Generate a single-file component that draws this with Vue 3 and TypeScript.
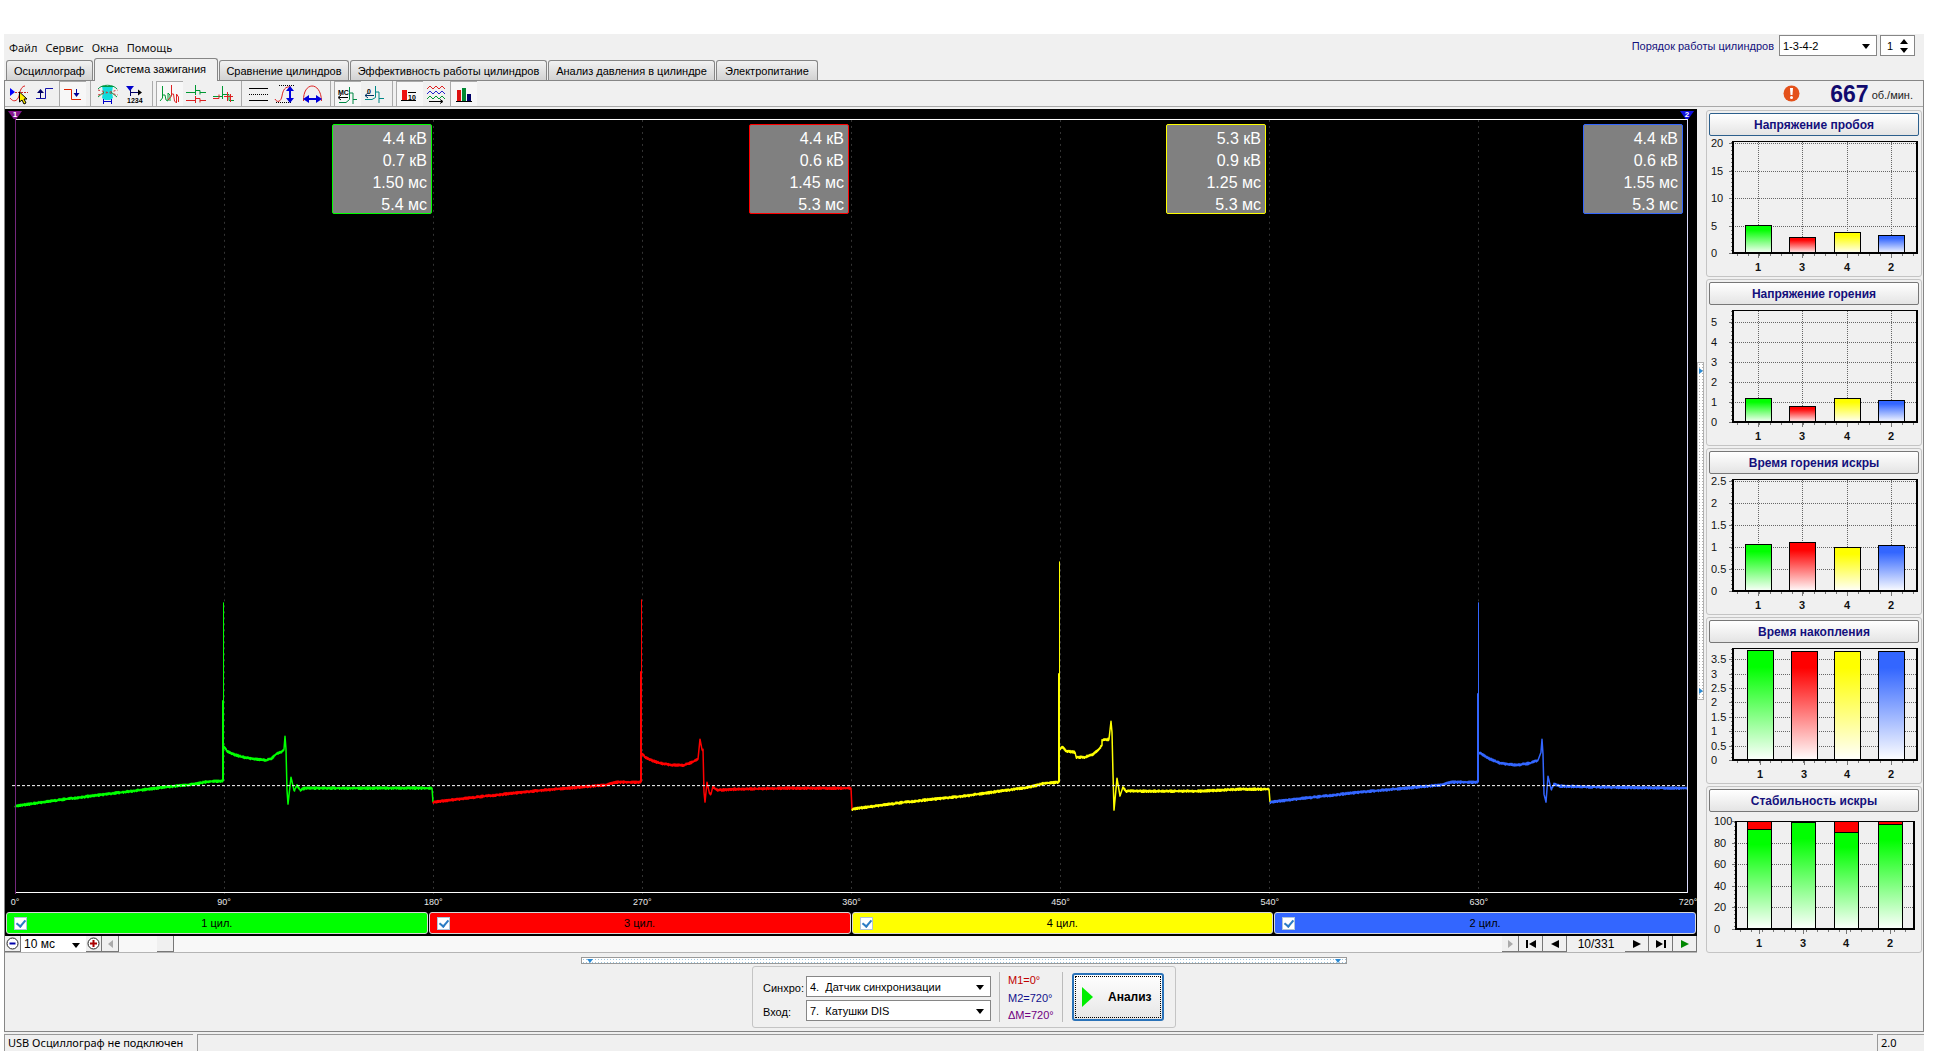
<script setup lang="ts">
import { ref } from 'vue'

type Point = [number, number]

interface Cylinder {
  id: number
  color: string
  values: string[]
  spike: { x: number; top: number; stub: number; base: number }
  before: Point[]
  after: Point[]
}

interface Bar {
  x: number
  top: number
  color: string
  label: string
  bad?: number
}

interface Chart {
  title: string
  left: number
  right: number
  top: number
  barWidth: number
  labelX: number
  columns: boolean
  ticks: { y: number; text: string }[]
  bars: Bar[]
}

const menu = ['Файл', 'Сервис', 'Окна', 'Помощь']
const tabs = [
  'Осциллограф',
  'Система зажигания',
  'Сравнение цилиндров',
  'Эффективность работы цилиндров',
  'Анализ давления в цилиндре',
  'Электропитание',
]
const activeTab = ref(1)
const cylinderOrder = ref('1-3-4-2')
const firstCylinder = ref(1)
const sweep = ref('10 мс')
const sync = ref(4)
const input = ref(7)
const shown = ref([true, true, true, true])
const angles = [0, 90, 180, 270, 360, 450, 540, 630, 720]
const gridLines = [219, 428, 637, 846, 1055, 1264, 1473]

const cylinders: Cylinder[] = [
  {
    id: 1,
    color: '#00ff00',
    values: ['4.4 кВ', '0.7 кВ', '1.50 мс', '5.4 мс'],
    spike: { x: 218, top: 494, stub: 592, base: 673 },
    before: [[10, 698], [60, 691], [118, 684], [160, 679], [190, 676], [200, 674], [208, 673], [218, 673]],
    after: [[219, 638], [222, 643], [228, 646], [238, 649], [250, 651], [262, 652], [267, 650], [271, 646], [276, 644], [279, 641], [280, 628], [281, 641], [282, 682], [283, 696], [286, 669], [289, 683], [292, 677], [295, 682], [300, 680], [340, 680], [427, 680], [428, 694]],
  },
  {
    id: 3,
    color: '#ff0000',
    values: ['4.4 кВ', '0.6 кВ', '1.45 мс', '5.3 мс'],
    spike: { x: 636, top: 491, stub: 563, base: 674 },
    before: [[428, 694], [480, 688], [538, 682], [600, 677], [612, 674], [636, 674]],
    after: [[637, 645], [640, 649], [646, 652], [655, 655], [667, 657], [679, 657], [687, 654], [693, 651], [695, 631], [697, 642], [698, 641], [699, 684], [700, 694], [702, 674], [704, 684], [706, 686], [708, 679], [712, 682], [730, 681], [785, 680], [846, 680], [847, 702]],
  },
  {
    id: 4,
    color: '#ffff00',
    values: ['5.3 кВ', '0.9 кВ', '1.25 мс', '5.3 мс'],
    spike: { x: 1054, top: 453, stub: 565, base: 674 },
    before: [[847, 701], [900, 694], [958, 688], [1010, 681], [1025, 679], [1040, 675], [1054, 674]],
    after: [[1055, 640], [1058, 639], [1061, 643], [1070, 644], [1071, 649], [1080, 649], [1088, 646], [1094, 641], [1097, 637], [1097, 632], [1104, 631], [1106, 613], [1107, 624], [1108, 666], [1109, 702], [1112, 670], [1115, 688], [1118, 679], [1121, 683], [1125, 683], [1195, 683], [1235, 681], [1264, 681], [1265, 694]],
  },
  {
    id: 2,
    color: '#3366ff',
    values: ['4.4 кВ', '0.6 кВ', '1.55 мс', '5.3 мс'],
    spike: { x: 1473, top: 494, stub: 585, base: 674 },
    before: [[1265, 694], [1300, 690], [1355, 684], [1435, 677], [1447, 674], [1473, 674]],
    after: [[1474, 644], [1483, 650], [1495, 655], [1511, 657], [1525, 655], [1533, 652], [1536, 644], [1537, 631], [1538, 646], [1539, 686], [1541, 694], [1543, 668], [1546, 682], [1549, 676], [1555, 678], [1595, 679], [1682, 680]],
  },
]

/* Sampled signal: straight runs between the key points with a small ripple on the flat parts. */
function samples(points: Point[]): string {
  const out: string[] = []
  let seed = 7
  for (let i = 0; i < points.length - 1; i++) {
    const [x0, y0] = points[i]
    const [x1, y1] = points[i + 1]
    const steep = Math.abs(y1 - y0) > Math.abs(x1 - x0) * 2
    const n = steep ? 1 : Math.max(1, Math.round((x1 - x0) * 2))
    for (let k = 0; k < n; k++) {
      seed = (seed * 16807) % 2147483647
      const ripple = steep ? 0 : (k % 2 ? 1 : -1) * (0.3 + (seed / 2147483647) * 0.9)
      const t = k / n
      out.push(`${(x0 + (x1 - x0) * t).toFixed(1)},${(y0 + (y1 - y0) * t + ripple).toFixed(1)}`)
    }
  }
  out.push(points[points.length - 1].join(','))
  return out.join(' ')
}

const G = '#00ff00'
const R = '#ff0000'
const Y = '#ffff00'
const B = '#3366ff'

function ticks(texts: string[], from: number, step: number) {
  return texts.map((text, i) => ({ text, y: Math.round(from - i * step) }))
}

function bars(xs: number[], tops: number[], colors: string[], bad: number[] = []): Bar[] {
  return xs.map((x, i) => ({ x, top: tops[i], color: colors[i], label: ['1', '3', '4', '2'][i], bad: bad[i] }))
}

const wide = { left: 24, right: 208, top: 7, barWidth: 27, labelX: 2 }
const charts: Chart[] = [
  { ...wide, title: 'Напряжение пробоя', columns: true, ticks: ticks(['0', '5', '10', '15', '20'], 118, 27.4), bars: bars([50, 94, 139, 183], [90, 102, 97, 100], [G, R, Y, B]) },
  { ...wide, title: 'Напряжение горения', columns: true, ticks: ticks(['0', '1', '2', '3', '4', '5'], 118, 20), bars: bars([50, 94, 139, 183], [94, 102, 94, 96], [G, R, Y, B]) },
  { ...wide, title: 'Время горения искры', columns: true, ticks: ticks(['0', '0.5', '1', '1.5', '2', '2.5'], 118, 22), bars: bars([50, 94, 139, 183], [71, 69, 74, 72], [G, R, Y, B]) },
  { ...wide, title: 'Время накопления', columns: false, ticks: ticks(['0', '0.5', '1', '1.5', '2', '2.5', '3', '3.5'], 118, 14.4), bars: bars([52, 96, 139, 183], [8, 9, 9, 9], [G, R, Y, B]) },
  { title: 'Стабильность искры', left: 27, right: 205, top: 11, barWidth: 25, labelX: 5, columns: false, ticks: ticks(['0', '20', '40', '60', '80', '100'], 118, 21.6), bars: bars([51, 95, 138, 182], [18, 11, 21, 13], [G, G, G, G], [11, 0, 11, 11]) },
]

function minorTicks(chart: Chart): number[] {
  const out: number[] = []
  for (let x = chart.left + 4; x < chart.right; x += 11) out.push(x)
  return out
}
</script>

<template>
  <div class="app">
    <header class="head">
      <nav class="menu">
        <a v-for="m in menu" :key="m" href="#">{{ m }}</a>
      </nav>
      <div class="order">
        <label for="order">Порядок работы цилиндров</label>
        <span class="combo order-combo">
          <select id="order" v-model="cylinderOrder"><option>1-3-4-2</option><option>1-2-4-3</option></select>
          <svg class="arrow" width="8" height="5"><path d="M0 0h8L4 5z" /></svg>
        </span>
        <span class="combo spin">
          <input v-model="firstCylinder" type="number" aria-label="Номер цилиндра" />
          <svg class="updown" width="8" height="14"><path d="M0 5h8L4 0zM0 9h8L4 14z" /></svg>
        </span>
      </div>
    </header>

    <div class="tabs" role="tablist">
      <button
        v-for="(t, i) in tabs"
        :key="t"
        role="tab"
        :class="['tab', 'tab-' + i, { active: i === activeTab }]"
        @click="activeTab = i"
      >{{ t }}</button>
    </div>

    <section class="page">
      <div class="toolbar">
        <button class="tool" aria-label="Курсор">
          <svg viewBox="0 0 27 24"><path d="M5 6v8l5-4z" fill="#00f" /><path d="M10 10.500h13" stroke="#c22" stroke-dasharray="2 1" /><path d="M5 16c3 4 7 4 9-2 1-6 3-10 6-10" stroke="#d22" fill="none" /><path d="M14.500 10v10l2.500-2 2 4 2-1-2-4h3z" fill="#fe0" stroke="#000" /></svg>
        </button>
        <button class="tool" aria-label="Передний фронт">
          <svg viewBox="0 0 27 24"><path d="M4 16.500h9.500v-10H21" stroke="#11a" fill="none" /><path d="M8.500 16V8" stroke="#006" /><path d="M5 11l3.500-4 3.500 4z" fill="#006" /></svg>
        </button>
        <button class="tool pressed" aria-label="Задний фронт">
          <svg viewBox="0 0 27 24"><path d="M5 7.500h7.500v10H22" stroke="#d20" fill="none" /><path d="M17.500 7v6" stroke="#009" /><path d="M14.500 11l3 4 3-4z" fill="#009" /></svg>
        </button>
        <span class="sep"></span>
        <button class="tool" aria-label="Фильтр">
          <svg viewBox="0 0 27 24"><path d="M8 4h11l-1 6 1 6-3 2h-5l-3-2 1-6z" fill="#1dd" /><path d="M4 7c4-5 15-5 19 0M4 15l6-5M23 15l-6-5M8 4.500h11" stroke="#094" fill="none" /><path d="M4 8l20 5M4 13l20-5" stroke="#c33" stroke-dasharray="2 2" /><path d="M9 19.500h9M9.500 17v5M17.500 17v5" stroke="#00c" /></svg>
        </button>
        <button class="tool" aria-label="Сглаживание">
          <svg viewBox="0 0 27 24"><path d="M5 4h8l-4 5z" fill="#00c" /><path d="M9.500 8v6M10 10.500h9" stroke="#006" /><path d="M17 7.500l4 3-4 3z" fill="#000" /><text x="6" y="21" class="tiny">1234</text></svg>
        </button>
        <span class="sep"></span>
        <button class="tool pressed" aria-label="Парад">
          <svg viewBox="0 0 27 24"><path d="M4 19l2.500-3V4M6.500 13H9l1 5 2 1v-8l2 2v6" stroke="#093" fill="none" /><path d="M12 18l3.500-4V3M15.500 12h2l1 7 2 2v-9l2 3v5" stroke="#d22" fill="none" /></svg>
        </button>
        <button class="tool" aria-label="Растр">
          <svg viewBox="0 0 27 24"><path d="M3 10.500h9.500M12.500 3v10M13 8.500h4v4M17 10.500h6" stroke="#093" fill="none" /><path d="M3 18.500h9.500M12.500 14v7M13 16.500h4v4M17 18.500h6" stroke="#d22" fill="none" /></svg>
        </button>
        <button class="tool" aria-label="Наложение">
          <svg viewBox="0 0 27 24"><path d="M3 14.500h9.500M12.500 4v13M13 12.500h6v6h5" stroke="#093" fill="none" /><path d="M3 16.500h6v-4M14 14.500h9M17.500 10v9M20.500 12v8" stroke="#d22" fill="none" /></svg>
        </button>
        <span class="sep"></span>
        <button class="tool" aria-label="Линии">
          <svg viewBox="0 0 27 24"><path d="M4 6.500h19M4 18.500h19" stroke="#000" /><path d="M4 12.500h19" stroke="#000" stroke-dasharray="1 1" /></svg>
        </button>
        <button class="tool" aria-label="Амплитуда">
          <svg viewBox="0 0 27 24"><path d="M7 3.500h16M4 20.500h16" stroke="#000" stroke-dasharray="1 1" /><path d="M3 17c2 4 6 3 7-3s3-10 9-9" stroke="#d22" fill="none" /><path d="M18 8v9" stroke="#00d" stroke-width="2" /><path d="M14 9l4-5 4 5zM14 16l4 5 4-5z" fill="#00d" /></svg>
        </button>
        <button class="tool" aria-label="Период">
          <svg viewBox="0 0 27 24"><path d="M4.500 19C4 -1 22 -1 22.500 19" stroke="#d22" fill="none" /><path d="M8 17h11" stroke="#00d" stroke-width="2" /><path d="M10 13v8l-6-4zM17 13v8l6-4z" fill="#00d" /></svg>
        </button>
        <span class="sep"></span>
        <button class="tool pressed" aria-label="Миллисекунды">
          <svg viewBox="0 0 27 24"><text x="4" y="13" class="tiny">MC</text><path d="M5 15.500h9M7 13l-3 2.500 3 2.500" stroke="#000" fill="none" /><path d="M5 20.500h7l3.500-3V5M16 11h3v11M19 17.500h4" stroke="#084" fill="none" /></svg>
        </button>
        <button class="tool" aria-label="Градусы">
          <svg viewBox="0 0 27 24"><text x="6" y="12" class="tiny">0</text><path d="M4 13.500h9M7 11l-3 2.500 3 2.500" stroke="#036" fill="none" /><path d="M4 17.500h7l3.500-2V4M15 10h3v11M18 16.500h5" stroke="#088" fill="none" /></svg>
        </button>
        <span class="sep"></span>
        <button class="tool pressed" aria-label="Значения">
          <svg viewBox="0 0 27 24"><path d="M6 8h5v10H6z" fill="#e11" /><path d="M5 18.500h15M12 10.500h8" stroke="#000" /><text x="12" y="18" class="tiny">10</text></svg>
        </button>
        <button class="tool" aria-label="Графики">
          <svg viewBox="0 0 27 24"><path d="M4 7l3-3 3 3 3-3 3 3 3-3 3 3" stroke="#d22" fill="none" /><path d="M4 12l3-3 3 3 3-3 3 3 3-3 3 3" stroke="#22c" fill="none" /><path d="M4 17l3-3 3 3 3-3 3 3 3-3 3 3" stroke="#093" fill="none" /><path d="M6 19.500h13M17 17.500l3 2-3 2" stroke="#000" fill="none" /></svg>
        </button>
        <button class="tool pressed" aria-label="Диаграммы">
          <svg viewBox="0 0 27 24"><path d="M7 8h4v11H7z" fill="#d11" /><path d="M12 6h4v13h-4z" fill="#083" /><path d="M17 12h4v7h-4z" fill="#006" /><path d="M6 19.500h16" stroke="#000" /></svg>
        </button>

        <div class="rpm">
          <svg width="17" height="17" viewBox="0 0 17 17"><circle cx="8.500" cy="8.500" r="8" fill="#e4511a" /><path d="M7 3h3l-.5 7h-2z" fill="#fff" /><circle cx="8.500" cy="12.500" r="1.500" fill="#fff" /></svg>
          <strong>667</strong>
          <span>об./мин.</span>
        </div>
      </div>

      <div class="main">
        <div class="scope-col">
          <div class="scope">
            <div class="plot">
              <svg class="trace" viewBox="0 0 1692 786" preserveAspectRatio="none">
                <line v-for="x in gridLines" :key="x" :x1="x + 0.5" :x2="x + 0.5" y1="11" y2="786" stroke="#343434" stroke-dasharray="2 4" />
                <line x1="10" x2="1683" y1="10.500" y2="10.500" stroke="#fff" />
                <line x1="10" x2="1683" y1="784.500" y2="784.500" stroke="#fff" />
                <g v-for="(c, i) in cylinders" v-show="shown[i]" :key="c.id" fill="none" :stroke="c.color" stroke-width="1.500" stroke-linejoin="round">
                  <polyline :points="samples(c.before)" />
                  <path :d="`M${c.spike.x} ${c.spike.base}V${c.spike.stub}`" stroke-width="2" />
                  <path :d="`M${c.spike.x + 0.5} ${c.after[0][1]}V${c.spike.top}`" stroke-width="1" />
                  <polyline :points="samples(c.after)" />
                </g>
                <line x1="7" x2="1683" y1="677.500" y2="677.500" stroke="#fff" stroke-dasharray="3 2" />
                <line x1="10.500" x2="10.500" y1="6" y2="786" stroke="#74277c" />
                <line x1="1682.500" x2="1682.500" y1="8" y2="785" stroke="#dcdcff" />
              </svg>
              <span class="marker m1">1</span>
              <span class="marker m2">2</span>
              <div class="readings">
                <div v-for="c in cylinders" :key="c.id" class="reading" :style="{ borderColor: c.color }">
                  <span v-for="v in c.values" :key="v">{{ v }}</span>
                </div>
              </div>
            </div>
            <div class="axis">
              <span v-for="a in angles" :key="a"><i>{{ a }}°</i></span>
            </div>
            <div class="cylinders">
              <label v-for="(c, i) in cylinders" :key="c.id" :style="{ background: c.color }">
                <input v-model="shown[i]" type="checkbox" />
                <span>{{ c.id }} цил.</span>
              </label>
            </div>
          </div>

          <div class="sweep">
            <button class="cell zoom" aria-label="Уменьшить"><svg width="13" height="13"><circle cx="6.500" cy="6.500" r="5.500" fill="#fff" stroke="#222" /><path d="M3.500 6.500h6" stroke="#00a" stroke-width="2" /></svg></button>
            <span class="combo sweep-combo">
              <select v-model="sweep" aria-label="Развёртка"><option>10 мс</option><option>20 мс</option></select>
              <svg class="arrow" width="8" height="5"><path d="M0 0h8L4 5z" /></svg>
            </span>
            <button class="cell zoom" aria-label="Увеличить"><svg width="13" height="13"><circle cx="6.500" cy="6.500" r="5.500" fill="#fff" stroke="#222" /><path d="M3 6.500h7M6.500 3v7" stroke="#a00" stroke-width="2" /></svg></button>
            <button class="cell step" aria-label="Влево"><svg width="5" height="8"><path d="M5 0v8L0 4z" fill="#aaa" /></svg></button>
            <div class="track"><button class="thumb" aria-label="Позиция"></button></div>
            <button class="cell step" aria-label="Вправо"><svg width="5" height="8"><path d="M0 0v8l5-4z" fill="#aaa" /></svg></button>
            <button class="cell nav" aria-label="В начало"><svg width="10" height="8"><path d="M0 0h2v8H0zM10 0v8L3 4z" /></svg></button>
            <button class="cell nav" aria-label="Назад"><svg width="8" height="8"><path d="M8 0v8L0 4z" /></svg></button>
            <output class="frame">10/331</output>
            <button class="cell nav" aria-label="Вперёд"><svg width="8" height="8"><path d="M0 0v8l8-4z" /></svg></button>
            <button class="cell nav" aria-label="В конец"><svg width="10" height="8"><path d="M8 0h2v8H8zM0 0v8l7-4z" /></svg></button>
            <button class="cell nav" aria-label="Пуск"><svg width="8" height="8"><path d="M0 0v8l8-4z" fill="#080" /></svg></button>
          </div>
        </div>

        <div class="vsplit"><div class="grip"><svg width="4" height="6"><path d="M0 0v6l4-3z" /></svg><svg width="4" height="6"><path d="M0 0v6l4-3z" /></svg></div></div>

        <aside class="side">
          <section v-for="(c, i) in charts" :key="c.title" class="group">
            <button :class="['title', { focus: i === 0 }]">{{ c.title }}</button>
            <svg class="chart" width="211" height="141" viewBox="0 0 211 141">
              <defs>
                <linearGradient v-for="(b, k) in c.bars" :id="`bar-${i}-${k}`" :key="k" x1="0" y1="0" x2="0" y2="1">
                  <stop offset="0.150" :stop-color="b.color" />
                  <stop offset="1" stop-color="#fff" />
                </linearGradient>
              </defs>
              <g stroke="#666" stroke-dasharray="1 1">
                <line v-for="t in c.ticks" :key="t.text" :x1="c.left" :x2="c.right" :y1="t.y + 0.5" :y2="t.y + 0.5" />
                <template v-if="c.columns">
                  <line v-for="b in c.bars" :key="b.label" :x1="b.x - 0.5" :x2="b.x - 0.5" :y1="c.top" y2="118" />
                </template>
              </g>
              <g stroke="#777">
                <line v-for="t in c.ticks" :key="t.text" :x1="c.left - 4" :x2="c.left" :y1="t.y + 0.5" :y2="t.y + 0.5" />
                <line v-for="x in minorTicks(c)" :key="x" :x1="x + 0.5" :x2="x + 0.5" y1="118" y2="121" />
                <line v-for="b in c.bars" :key="b.label" :x1="b.x - 0.5" :x2="b.x - 0.5" y1="118" y2="123" />
                <line :x1="c.left - 1.5" :x2="c.left - 1.5" :y1="c.top" y2="118" stroke-dasharray="1 3" />
              </g>
              <g stroke="#000">
                <template v-for="(b, k) in c.bars" :key="b.label">
                  <rect :x="b.x - Math.ceil(c.barWidth / 2) + 0.5" :y="b.top + 0.5" :width="c.barWidth - 1" :height="118 - b.top" :fill="`url(#bar-${i}-${k})`" />
                  <rect v-if="b.bad" :x="b.x - Math.ceil(c.barWidth / 2) + 0.5" :y="b.bad - 0.5" :width="c.barWidth - 1" :height="b.top - b.bad + 1" fill="#f00" />
                </template>
              </g>
              <path :d="`M${c.left} ${c.top - 1}V119M${c.right} ${c.top - 1}V119M${c.left - 1} 118H${c.right + 1}`" stroke="#000" stroke-width="2" />
              <path :d="`M${c.left} ${c.top - 0.5}H${c.right}`" stroke="#000" />
              <text v-for="t in c.ticks" :key="t.text" :x="c.labelX" :y="t.y + 4">{{ t.text }}</text>
              <text v-for="b in c.bars" :key="b.label" class="cyl" :x="b.x - 1" y="136">{{ b.label }}</text>
            </svg>
          </section>
        </aside>
      </div>

      <div class="bottom">
        <div class="hsplit"><svg width="6" height="4"><path d="M0 0h6L3 4z" /></svg><svg width="6" height="4"><path d="M0 0h6L3 4z" /></svg></div>
        <form class="panel" @submit.prevent>
          <div class="fields">
            <label for="sync">Синхро:</label>
            <span class="combo"><select id="sync" v-model="sync"><option :value="4">4.&nbsp; Датчик синхронизации</option></select><svg class="arrow" width="8" height="5"><path d="M0 0h8L4 5z" /></svg></span>
            <label for="input">Вход:</label>
            <span class="combo"><select id="input" v-model="input"><option :value="7">7.&nbsp; Катушки DIS</option></select><svg class="arrow" width="8" height="5"><path d="M0 0h8L4 5z" /></svg></span>
          </div>
          <div class="marks">
            <span class="c1">M1=0°</span>
            <span class="c2">M2=720°</span>
            <span class="c3">ΔM=720°</span>
          </div>
          <button class="run"><svg width="11" height="20"><path d="M0 0v20l11-10z" fill="#0e0" /></svg><b>Анализ</b></button>
        </form>
      </div>
    </section>

    <footer class="status">
      <span class="s1">USB Осциллограф не подключен</span>
      <span class="s2"></span>
      <span class="s3">2.0</span>
    </footer>
  </div>
</template>

<style>
body {
  margin: 0;
  background: #fff;
}
</style>

<style scoped>
* {
  box-sizing: border-box;
}
.app {
  display: flex;
  flex-direction: column;
  min-height: 100vh;
  padding: 34px 12px 5px 4px;
  font: 11px/14px "Liberation Sans", Arial, sans-serif;
  color: #000;
}
button,
select,
input {
  margin: 0;
  padding: 0;
  font: inherit;
  color: inherit;
  border: 0;
  border-radius: 0;
  background: none;
}
svg {
  display: block;
}
.head {
  display: flex;
  justify-content: space-between;
  height: 24px;
  background: #f0f0f0;
}
.menu {
  display: flex;
  gap: 8px;
  padding: 7px 5px;
  font: 11px/14px "Noto Sans", sans-serif;
}
.menu a {
  color: #111;
  text-decoration: none;
}
.order {
  display: flex;
  align-items: flex-start;
  padding: 1px 9px 0 0;
}
.order label {
  padding: 4px 5px 0 0;
  color: #14107c;
}
.combo {
  position: relative;
  display: block;
  height: 21px;
  border: 1px solid #868686;
  background: #fff;
}
.combo select,
.combo input {
  display: block;
  width: 100%;
  height: 100%;
  padding-left: 3px;
  appearance: none;
  outline: 0;
}
.combo input {
  appearance: textfield;
  padding-left: 6px;
}
.combo input::-webkit-inner-spin-button {
  display: none;
}
.arrow {
  position: absolute;
  right: 6px;
  top: 8px;
  pointer-events: none;
}
.updown {
  position: absolute;
  right: 6px;
  top: 3px;
  pointer-events: none;
}
.order-combo {
  width: 98px;
  margin-right: 3px;
}
.spin {
  width: 35px;
}
.tabs {
  display: flex;
  align-items: flex-end;
  gap: 1px;
  height: 22px;
  padding-left: 2px;
  background: #f0f0f0;
}
.tab {
  flex: none;
  height: 20px;
  border: 1px solid #868686;
  border-bottom: 0;
  border-radius: 3px 3px 0 0;
  background: linear-gradient(#f2f2f2, #d2d2d2);
  white-space: nowrap;
}
.tab.active {
  height: 23px;
  margin-bottom: -1px;
  padding-bottom: 2px;
  background: #f0f0f0;
  z-index: 1;
}
.tab-0 { width: 87px; }
.tab-1 { width: 124px; }
.tab-2 { width: 130px; }
.tab-3 { width: 197px; }
.tab-4 { width: 167px; }
.tab-5 { width: 102px; }
.page {
  flex: 1;
  display: flex;
  flex-direction: column;
  border: 1px solid #868686;
  background: #f0f0f0;
}
.toolbar {
  display: flex;
  height: 26px;
  border-bottom: 1px solid #a8a8a8;
}
.tool {
  width: 27px;
  height: 25px;
}
.tool svg {
  width: 27px;
  height: 24px;
}
.pressed {
  background: #f7f7f7;
  box-shadow: inset 1px 1px #aaa;
}
.sep {
  width: 8px;
  background: linear-gradient(#aaa, #aaa) 4px 0 / 1px 100% no-repeat;
}
.tiny {
  font: bold 7px/8px "Liberation Sans", Arial, sans-serif;
}
.rpm {
  display: flex;
  align-items: center;
  margin-left: auto;
  padding-right: 10px;
}
.rpm strong {
  margin: 0 3px 0 30px;
  font-size: 23px;
  line-height: 24px;
  color: #110a6e;
}
.rpm span {
  color: #222;
  padding-top: 3px;
}
.main {
  flex: 1;
  display: flex;
  padding-top: 2px;
}
.scope-col {
  flex: 1;
  display: flex;
  flex-direction: column;
  min-width: 0;
}
.scope {
  flex: 1;
  display: flex;
  flex-direction: column;
  background: #000;
}
.plot {
  flex: 1;
  position: relative;
  min-height: 300px;
}
.trace {
  position: absolute;
  inset: 0;
  width: 100%;
  height: 100%;
}
.marker {
  position: absolute;
  top: 2px;
  width: 14px;
  height: 8px;
  clip-path: polygon(0 0, 100% 0, 60% 100%, 40% 100%);
  font: bold 8px/8px "Liberation Sans", Arial, sans-serif;
  color: #fff;
  text-align: center;
}
.m1 {
  left: 3px;
  background: #82158c;
}
.m2 {
  right: 3px;
  background: #1010e0;
}
.readings {
  position: absolute;
  inset: 15px 14px auto 10px;
  display: grid;
  grid-template-columns: repeat(4, 1fr);
  justify-items: end;
}
.reading {
  width: 100px;
  height: 90px;
  padding: 3px 4px;
  border: 1px solid;
  border-radius: 2px;
  background: #808080;
  font-size: 16px;
  line-height: 22px;
  color: #fff;
  text-align: right;
}
.reading span {
  display: block;
}
.axis {
  display: flex;
  justify-content: space-between;
  height: 17px;
  padding: 1px 9px 0 10px;
  overflow: hidden;
}
.axis span {
  display: flex;
  justify-content: center;
  width: 0;
}
.axis i {
  flex: none;
  font: 9px/14px "Liberation Sans", Arial, sans-serif;
  color: #e8e8e8;
}
.cylinders {
  display: flex;
  gap: 1px;
  height: 25px;
  padding: 1px 1px 2px;
}
.cylinders label {
  flex: 1;
  display: flex;
  align-items: center;
  padding: 0 7px;
  border: 1px solid #d8d8d8;
  border-radius: 3px;
}
.cylinders span {
  flex: 1;
  padding-right: 13px;
  text-align: center;
}
.cylinders input {
  appearance: none;
  width: 13px;
  height: 13px;
  border: 1px solid #b0c4d8;
  background: #fff;
}
.cylinders input:checked::after {
  content: "";
  display: block;
  width: 4px;
  height: 7px;
  margin: 0 0 0 3px;
  border: solid #2b7cc4;
  border-width: 0 2px 2px 0;
  transform: rotate(40deg);
}
.sweep {
  display: flex;
  height: 17px;
  border-bottom: 1px solid #b4b4b4;
}
.cell {
  flex: none;
  display: flex;
  align-items: center;
  justify-content: center;
  border-right: 1px solid #777;
  border-bottom: 1px solid #777;
  background: #f0f0f0;
}
.zoom {
  width: 16px;
}
.step {
  width: 17px;
}
.nav {
  width: 24px;
}
.sweep-combo {
  width: 65px;
  height: 16px;
  border: 0;
  font-size: 12px;
}
.sweep-combo .arrow {
  top: 7px;
}
.track {
  flex: 1;
  background: #f8f8f8;
}
.thumb {
  display: block;
  width: 17px;
  height: 16px;
  margin-left: 38px;
  border-right: 1px solid #777;
  border-bottom: 1px solid #777;
  background: #f0f0f0;
}
.frame {
  flex: none;
  width: 58px;
  font-size: 12px;
  line-height: 17px;
  text-align: center;
}
.vsplit {
  display: flex;
  flex-direction: column;
  width: 9px;
  padding-top: 253px;
}
.grip {
  display: flex;
  flex-direction: column;
  justify-content: space-between;
  width: 7px;
  height: 338px;
  padding: 5px 1px;
  border: 1px solid #b0b0b0;
  background: radial-gradient(#b4b4b4 1px, transparent 1px) 0 0 / 3px 3px #fff;
}
.grip svg,
.hsplit svg {
  fill: #2a8ad4;
}
.side {
  display: flex;
  flex-direction: column;
  gap: 2px;
  width: 216px;
  margin-right: 1px;
  padding-top: 1px;
}
.group {
  height: 167px;
  padding: 2px;
  border: 1px solid #c4c4c4;
  border-radius: 3px;
}
.title {
  display: block;
  width: 100%;
  height: 23px;
  border: 1px solid #777;
  border-radius: 2px;
  background: linear-gradient(#fff, #e4e4e4);
  font-size: 12px;
  font-weight: bold;
  color: #14107c;
}
.title.focus {
  border-color: #2c5f8c;
}
.chart {
  margin-top: -1px;
  fill: #111;
}
.cyl {
  font-weight: bold;
  text-anchor: middle;
}
.chart path {
  fill: none;
}
.bottom {
  display: flex;
  flex-direction: column;
  align-items: center;
  padding: 4px 0 3px;
}
.hsplit {
  display: flex;
  justify-content: space-between;
  width: 766px;
  height: 7px;
  padding: 1px 5px;
  border: 1px solid #999;
  background: radial-gradient(#9cc4dc 1px, transparent 1px) 0 0 / 3px 3px #fff;
}
.panel {
  display: flex;
  align-items: center;
  height: 62px;
  margin-top: 2px;
  padding: 0 11px 0 10px;
  border: 1px solid #c4c4c4;
  border-radius: 3px;
}
.fields {
  display: grid;
  grid-template-columns: 43px 185px;
  row-gap: 3px;
  align-items: center;
  padding-top: 3px;
}
.fields label {
  padding-top: 2px;
}
.marks {
  display: flex;
  flex-direction: column;
  justify-content: space-between;
  width: 64px;
  height: 50px;
  margin: 0 9px 0 8px;
  padding: 1px 0 0 8px;
  border: solid #bbb;
  border-width: 0 1px;
}
.c1 { color: #c00000; }
.c2 { color: #10108c; }
.c3 { color: #700080; }
.run {
  display: flex;
  align-items: center;
  gap: 15px;
  width: 92px;
  height: 48px;
  padding-left: 8px;
  border: 2px solid #2a72b8;
  border-radius: 3px;
  outline: 1px dotted #000;
  outline-offset: -4px;
  background: linear-gradient(#fff, #e6e6e6);
  font-size: 12px;
}
.status {
  display: flex;
  gap: 4px;
  height: 19px;
  padding-top: 2px;
  background: #f0f0f0;
  font: 11px/16px "Noto Sans", sans-serif;
}
.status span {
  border-top: 1px solid #999;
  border-left: 1px solid #999;
  padding-left: 3px;
}
.s1 { width: 189px; }
.s2 { flex: 1; }
.s3 { width: 47px; }
</style>
